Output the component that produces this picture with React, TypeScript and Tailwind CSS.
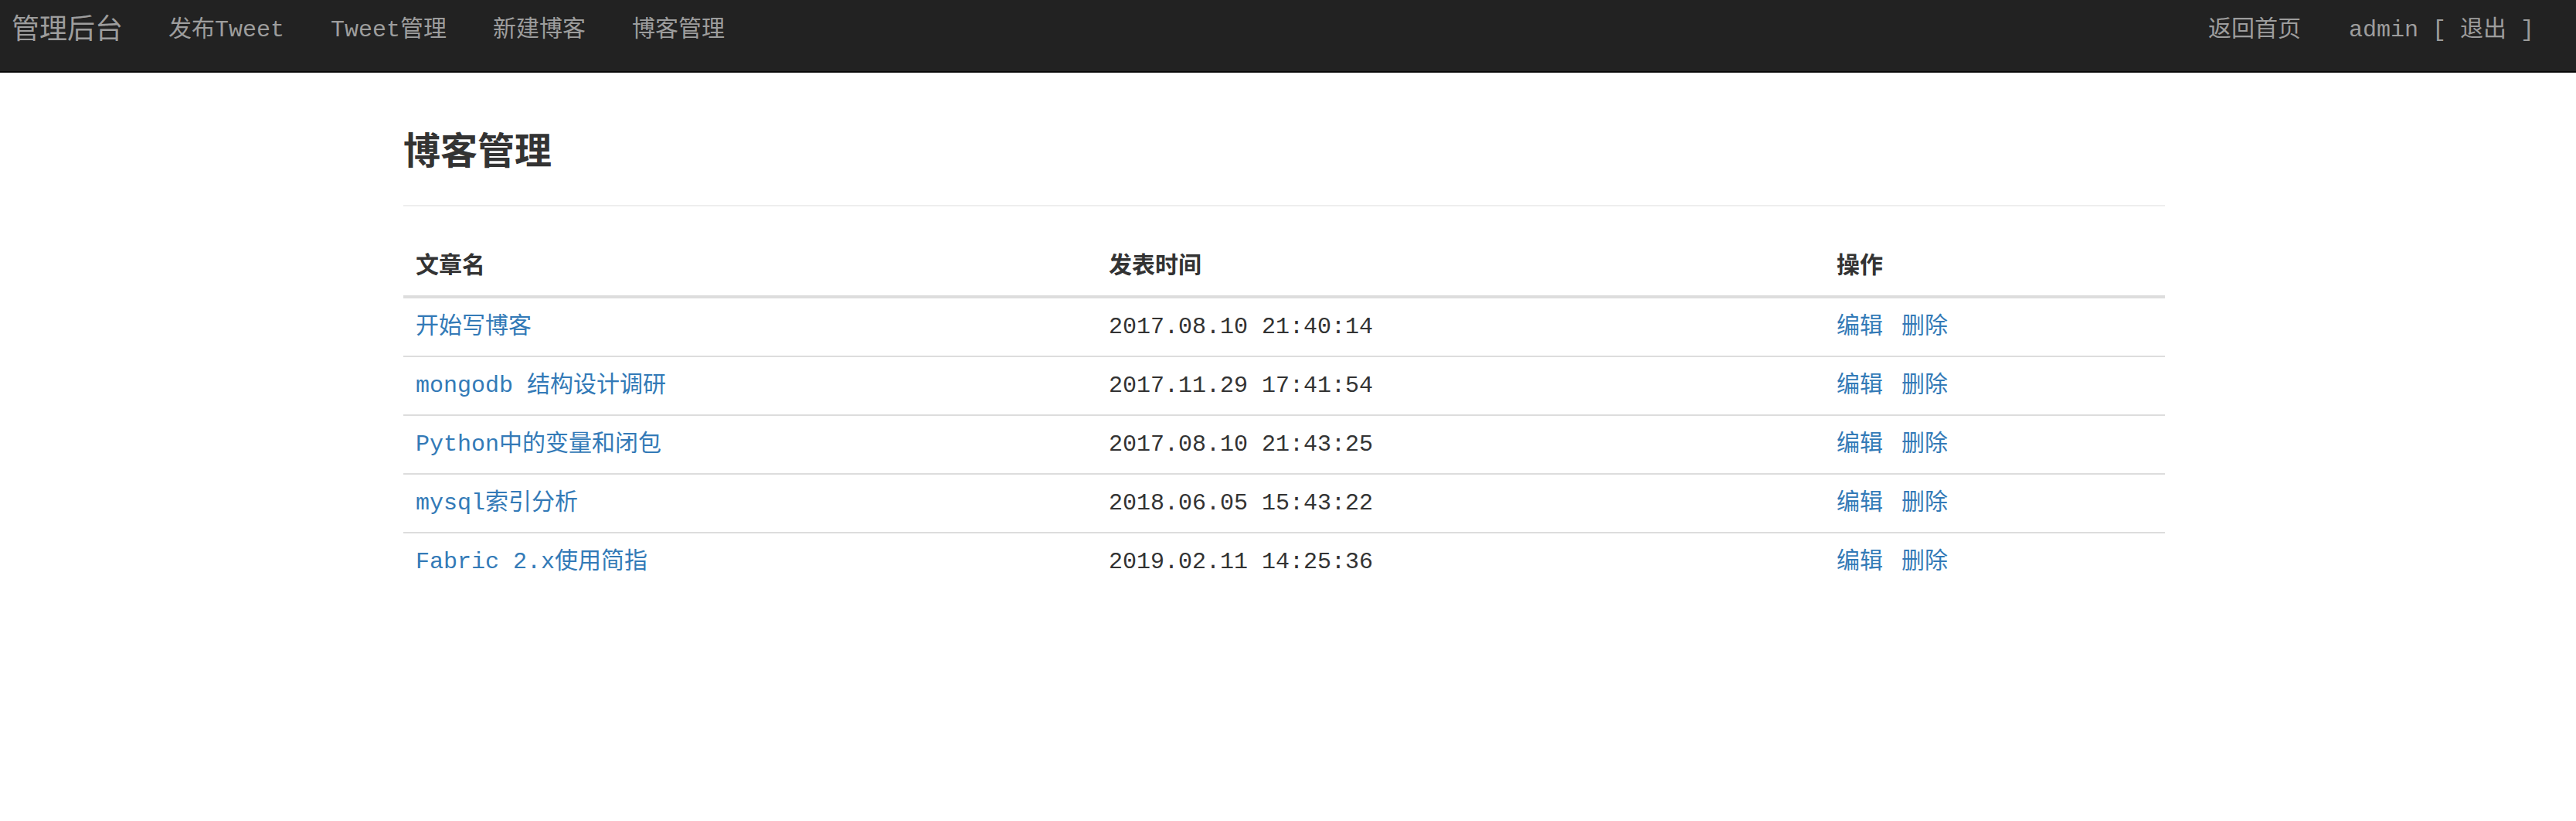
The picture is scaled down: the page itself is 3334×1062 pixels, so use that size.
import React from "react";

const FONT = { fontFamily: '"Liberation Mono", "Noto Sans CJK SC", monospace' };

const rows = [
  { title: "开始写博客", time: "2017.08.10 21:40:14" },
  { title: "mongodb 结构设计调研", time: "2017.11.29 17:41:54" },
  { title: "Python中的变量和闭包", time: "2017.08.10 21:43:25" },
  { title: "mysql索引分析", time: "2018.06.05 15:43:22" },
  { title: "Fabric 2.x使用简指", time: "2019.02.11 14:25:36" },
];

export default function App() {
  return (
    <div className="min-h-[1062px] bg-white" style={FONT}>
      <nav className="h-[94px] bg-[#222] border-b-2 border-[#080808] flex justify-between items-start text-[#9d9d9d]">
        <div className="flex items-start">
          <span className="pl-[15px] pr-[29px] pt-[20px] text-[36px] leading-[42px]">管理后台</span>
          <span className="px-[30px] pt-[18px] text-[30px] leading-[42px]">发布Tweet</span>
          <span className="px-[30px] pt-[18px] text-[30px] leading-[42px]">Tweet管理</span>
          <span className="px-[30px] pt-[18px] text-[30px] leading-[42px]">新建博客</span>
          <span className="px-[30px] pt-[18px] text-[30px] leading-[42px]">博客管理</span>
        </div>
        <div className="flex items-start pr-[54px] pt-[18px] text-[30px] leading-[42px]">
          <span className="whitespace-pre">返回首页</span>
          <span className="ml-[62px] whitespace-pre">admin [ 退出 ]</span>
        </div>
      </nav>
      <div className="ml-[522px] w-[2280px]">
        <h3 className="mt-[79px] text-[48px] leading-[53px] font-bold text-[#333] pb-[39px] border-b-2 border-[#eee]">
          博客管理
        </h3>
        <table className="mt-[41px] w-[2280px] table-fixed border-separate border-spacing-0 text-[30px] text-[#333]">
          <colgroup>
            <col className="w-[897px]" />
            <col className="w-[942px]" />
            <col className="w-[441px]" />
          </colgroup>
          <thead>
            <tr>
              <th className="text-left font-bold px-[16px] py-[16px] leading-[42px] border-b-4 border-[#ddd]">文章名</th>
              <th className="text-left font-bold px-[16px] py-[16px] leading-[42px] border-b-4 border-[#ddd]">发表时间</th>
              <th className="text-left font-bold px-[16px] py-[16px] leading-[42px] border-b-4 border-[#ddd]">操作</th>
            </tr>
          </thead>
          <tbody>
            {rows.map((r, i) => (
              <tr key={i}>
                <td className={"px-[16px] py-[16px] leading-[42px] whitespace-pre " + (i > 0 ? "border-t-2 border-[#ddd]" : "")}>
                  <span className="text-[#337ab7]">{r.title}</span>
                </td>
                <td className={"px-[16px] py-[16px] leading-[42px] whitespace-pre " + (i > 0 ? "border-t-2 border-[#ddd]" : "")}>
                  {r.time}
                </td>
                <td className={"px-[16px] py-[16px] leading-[42px] " + (i > 0 ? "border-t-2 border-[#ddd]" : "")}>
                  <span className="text-[#337ab7]">编辑</span>
                  <span className="text-[#337ab7] ml-[24px]">删除</span>
                </td>
              </tr>
            ))}
          </tbody>
        </table>
      </div>
    </div>
  );
}
